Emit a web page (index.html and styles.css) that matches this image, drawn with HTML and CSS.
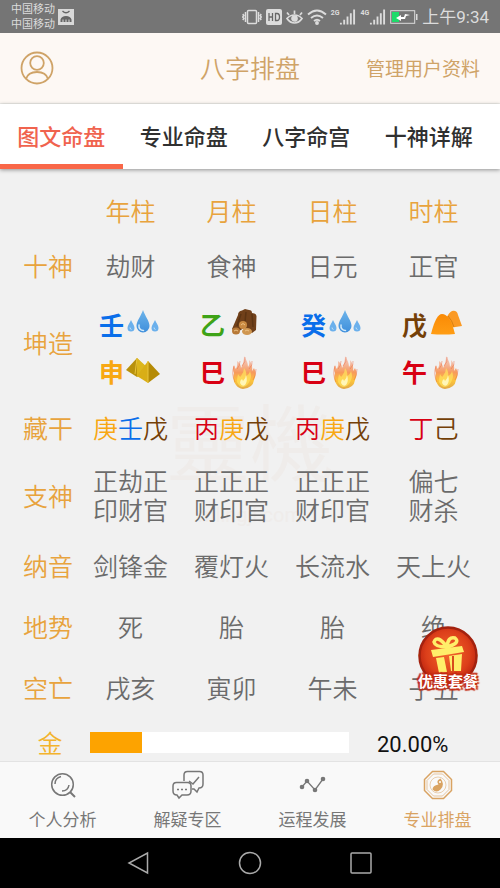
FILE: index.html
```html
<!DOCTYPE html>
<html lang="zh-CN">
<head>
<meta charset="utf-8">
<meta name="viewport" content="width=device-width, initial-scale=1">
<title>八字排盘</title>
<link rel="stylesheet" href="styles.css">
</head>
<body>
<svg class="defs" aria-hidden="true">
  <defs>
    <linearGradient id="g-water" x1="0" y1="0" x2="0" y2="1"><stop offset="0" stop-color="#6db4ea"/><stop offset="1" stop-color="#3f8fdc"/></linearGradient>
    <linearGradient id="g-fire" x1="0" y1="0" x2="0" y2="1"><stop offset="0" stop-color="#f4a08a" stop-opacity=".4"/><stop offset=".5" stop-color="#f79a5c"/><stop offset=".75" stop-color="#fdc43c"/><stop offset="1" stop-color="#e0a848"/></linearGradient>
    <linearGradient id="g-earth" x1="0" y1="0" x2="0" y2="1"><stop offset="0" stop-color="#fa8a05"/><stop offset="1" stop-color="#ff9d14"/></linearGradient>
    <radialGradient id="g-gift" cx=".5" cy=".45" r=".55"><stop offset="0" stop-color="#f4672c"/><stop offset=".7" stop-color="#dc3f1a"/><stop offset="1" stop-color="#bd2410"/></radialGradient>
    <symbol id="water" viewBox="0 0 36 36">
      <path d="M17 1C15 7 10.500 12 10.500 17a6.500 6.500 0 0 0 13 0C23.500 12 19 7 17 1z" fill="url(#g-water)"/>
      <path d="M13 16c-.5 3.500 1.500 5.500 4.500 5.500" fill="none" stroke="#d5ebfa" stroke-width="1.500" stroke-linecap="round"/>
      <path d="M5 11c-1 3-3.500 5-3.500 8a3.500 3.500 0 0 0 7 0c0-3-2.500-5-3.500-8zM29 11c-1 3-3.500 5-3.500 8a3.500 3.500 0 0 0 7 0c0-3-2.500-5-3.500-8z" fill="#6bb0ec"/>
      <path d="M4 18.500q.2 2 1.500 2M28 18.500q.2 2 1.500 2" fill="none" stroke="#c0e0f8"/>
    </symbol>
    <symbol id="wood" viewBox="0 0 36 36">
      <path d="M11 6q0-4 4-4.500L18 0l4 1q3 0 3 3 4 0 4.500 3L29 21l-4 3-8-5-8 5-4-4z" fill="#70401a"/>
      <path d="M14 5l-4 12M19 3l-1 10M25 5l1 13" stroke="#5c3413" stroke-width="1.500"/>
      <circle cx="16" cy="16" r="4" fill="#c98941"/><ellipse cx="9" cy="22" rx="4" ry="3.500" fill="#b87937"/><ellipse cx="20" cy="22.500" rx="5" ry="3.500" fill="#cf9650"/>
      <path d="M14 16q2-3 4 0M7 22q2-2 4 0M18 22q2-2 4 0" fill="none" stroke="#edc184"/>
    </symbol>
    <symbol id="gold" viewBox="0 0 36 36">
      <path d="M0 14L11 2l7 8-7 11z" fill="#b8910c"/><path d="M11 2l10 9-7 9-3 1z" fill="#dcb61c"/>
      <path d="M11 20L22 5v22z" fill="#d9ae16"/><path d="M22 5l12 13-12 9z" fill="#b58b06"/><path d="M11 2L9 18M22 5v22" stroke="#e8c53c"/>
    </symbol>
    <symbol id="fire" viewBox="0 0 36 36">
      <path d="M9 29Q5 24 7 17q-2-5 0-8 1 3 2 4 2-4 1-8 4 3 4 7 3-5 3-12 4 6 4 11 2-2 1-7 4 4 3 11l2-3q3 5 0 12-1 8-11 9-5-1-7-4z" fill="url(#g-fire)"/>
      <path d="M10 26q0-4 1-8 2 4 3 2 3-4 3-8 3 4 2 8 3-1 4-5 2 5 0 9-2 6-7 7-4 0-6-5z" fill="#ffe05c" opacity=".75"/>
      <path d="M13 27q0-3 2-4l1 2q3-3 3-6 2 6-1 10-3 2-5-2z" fill="#fff6b8"/>
      <path d="M7 10Q4 18 8 26M13 5q0 5-3 8M18 1q1 5-3 9M25 5q1 4-3 8M29 13q0 7-3 11" fill="none" stroke="#e8653f" stroke-opacity=".45"/>
    </symbol>
    <symbol id="earth" viewBox="0 0 36 36">
      <path d="M17 10q3-7 6-8 5-1 6 4l4 11-13 2z" fill="#fb9a25"/>
      <path d="M2 25Q7 5 13 5q8 0 13 20-12 1-24 0z" fill="url(#g-earth)"/><path d="M19 7q4 4 6 11" fill="none" stroke="#d9800f"/>
    </symbol>
    <symbol id="signal" viewBox="0 0 18 16"><path d="M1 14h2v2H1zM4.500 11h2v5h-2zM8 7.500h2V16H8zM11.500 4h2v12h-2zM15 0h2v16h-2z" fill="currentColor"/></symbol>
  </defs>
</svg>

<div class="status">
  <div class="carrier"><span>中国移动</span><span>中国移动</span></div>
  <svg class="app-badge" viewBox="0 0 16 16"><path fill="#d9d9d9" d="M0 0h16v16H0z"/><path d="M4.500 2q3.500 3.500 7 0" fill="none" stroke="#666" stroke-width="1.400"/><path d="M2.500 13V10.500Q3.500 7 8 7t5.500 3.500V13h-2v-2.500h-1V13h-2v-2.500h-1V13h-2v-2.500h-1V13z" fill="#666"/></svg>
  <div class="indicators">
    <svg width="20" height="16" viewBox="0 0 20 16" fill="none" stroke="currentColor" stroke-width="1.500"><rect x="5.500" y="1.500" width="9" height="13" rx="1"/><path d="M3.500 3v10M.8 5l1 1.500L.8 8l1 1.500-1 1.500M16.500 3v10M19.200 5l-1 1.500 1 1.500-1 1.500 1 1.500"/></svg>
    <svg width="16" height="16" viewBox="0 0 16 16"><rect width="16" height="16" rx="2" fill="currentColor"/><path d="M3 4v8M3 8h3.500M6.500 4v8M9.500 4.500v7h1.500q2.500 0 2.500-3.500T11 4.500z" fill="none" stroke="#666" stroke-width="1.300"/></svg>
    <svg width="17" height="16" viewBox="0 0 17 16" fill="none" stroke="currentColor" stroke-width="1.700"><path d="M1 9.500Q4 6 8.500 6T16 9.500Q13 14 8.500 14T1 9.500zM3 6L1 3.500M8.500 5V1.500M14 6l2-2.500"/><circle cx="8.500" cy="9.500" r="2.500" fill="currentColor"/></svg>
    <svg width="20" height="16" viewBox="0 0 20 16" fill="none" stroke="currentColor" stroke-width="1.900"><path d="M1 5.500q9-8 18 0M4 9q6-5 12 0M7 12q3-2.500 6 0"/><circle cx="10" cy="14" r="1" fill="currentColor"/></svg>
    <span class="cell"><small>2G</small><svg width="17" height="16"><use href="#signal"/></svg></span>
    <span class="cell"><small>4G</small><svg width="17" height="16"><use href="#signal"/></svg></span>
    <svg class="battery" width="28" height="14" viewBox="0 0 28 14"><rect x=".7" y=".7" width="24" height="12.600" fill="none" stroke="currentColor"/><path d="M2 2h7v10H2z" fill="#1edb6a"/><path d="M26 4h1.500v6H26z" fill="currentColor"/><path d="M6 8l5-3v2h3l1-3 5 1-4 1-1 3h-4v2z" fill="#fff"/></svg>
    <time>上午9:34</time>
  </div>
</div>

<header class="topbar">
  <button class="profile" aria-label="用户"><svg viewBox="0 0 34 34" fill="none" stroke="currentColor" stroke-width="1.800"><circle cx="17" cy="17" r="15.500"/><circle cx="17" cy="12" r="6.800"/><path d="M6 28q2-7 11-7t11 7"/></svg></button>
  <h1>八字排盘</h1>
  <a href="#manage">管理用户资料</a>
</header>

<nav class="tabs">
  <a class="active" href="#t1">图文命盘</a><a href="#t2">专业命盘</a><a href="#t3">八字命宫</a><a href="#t4">十神详解</a>
</nav>

<main>
  <div class="watermark" aria-hidden="true"><span>靈機</span><small>mlingji.com</small></div>
  <table>
    <thead><tr class="head"><td></td><th>年柱</th><th>月柱</th><th>日柱</th><th>时柱</th></tr></thead>
    <tbody>
      <tr><th>十神</th><td>劫财</td><td>食神</td><td>日元</td><td>正官</td></tr>
      <tr class="stems"><th>坤造</th>
        <td><div class="pair blue">壬<svg><use href="#water"/></svg></div><div class="pair amber">申<svg><use href="#gold"/></svg></div></td>
        <td><div class="pair green">乙<svg><use href="#wood"/></svg></div><div class="pair red">巳<svg><use href="#fire"/></svg></div></td>
        <td><div class="pair blue">癸<svg><use href="#water"/></svg></div><div class="pair red">巳<svg><use href="#fire"/></svg></div></td>
        <td><div class="pair brown">戊<svg><use href="#earth"/></svg></div><div class="pair red">午<svg><use href="#fire"/></svg></div></td>
      </tr>
      <tr class="hidden-stems"><th>藏干</th>
        <td><span class="amber">庚</span><span class="blue">壬</span><span class="brown">戊</span></td>
        <td><span class="red">丙</span><span class="amber">庚</span><span class="brown">戊</span></td>
        <td><span class="red">丙</span><span class="amber">庚</span><span class="brown">戊</span></td>
        <td><span class="red">丁</span><span class="brown">己</span></td>
      </tr>
      <tr class="gods"><th>支神</th><td>正劫正<br>印财官</td><td>正正正<br>财印官</td><td>正正正<br>财印官</td><td>偏七<br>财杀</td></tr>
      <tr><th>纳音</th><td>剑锋金</td><td>覆灯火</td><td>长流水</td><td>天上火</td></tr>
      <tr><th>地势</th><td>死</td><td>胎</td><td>胎</td><td>绝</td></tr>
      <tr><th>空亡</th><td>戌亥</td><td>寅卯</td><td>午未</td><td>子丑</td></tr>
    </tbody>
  </table>
  <div class="element">
    <span class="name">金</span>
    <div class="track"><div class="fill" style="width:20%"></div></div>
    <span class="percent">20.00%</span>
  </div>
  <button class="offer">
    <svg viewBox="0 0 64 60"><path d="M2 29l8-8v18zM62 29l-8-8v18z" fill="#f8d548"/><circle cx="32" cy="30" r="28.500" fill="url(#g-gift)" stroke="#a3220f" stroke-width="2.500"/><g fill="#ffee6a"><path d="M15 24l31-4 2 6-31 5zM20 32l8-1 3 15-8 1zM33 30l13-2-1 17h-10z"/></g><path d="M37 30v16" stroke="#d84b1c" stroke-width="2"/><path d="M31 21q-12 0-13-5 3-8 13 5zm0 0q1-11 8-9 6 5-8 9z" fill="none" stroke="#ffee6a" stroke-width="3.500"/></svg>
    <span>优惠套餐</span>
  </button>
</main>

<nav class="bottom">
  <a href="#b1"><svg viewBox="0 0 32 32" fill="none" stroke="currentColor" stroke-width="1.500"><circle cx="15.500" cy="15.500" r="10.800"/><path d="M23 23l5 5" stroke-width="2"/><path d="M8 15q0-6 6-7.500M15 22q6 0 7-6"/></svg>个人分析</a>
  <a href="#b2"><svg viewBox="0 0 32 32" fill="none" stroke="currentColor" stroke-width="1.500"><path d="M12 12V6q0-3.500 3.500-3.500h12Q31 2.500 31 6v9q0 4-4 4l-2 4-3-3h-2"/><path d="M17 12l4 3 6-7"/><path d="M4.500 13.500h11q3.500 0 3.500 3.500v5q0 4-4 4h-5l-3 3-2-3q-4 0-4-4v-5q0-3.500 3.500-3.500z"/><path d="M5 20.500h2M9 20.500h2M13 20.500h2"/></svg>解疑专区</a>
  <a href="#b3"><svg viewBox="0 0 32 32" fill="none" stroke="currentColor" stroke-width="1.300"><path d="M5 18l5-6 8 9 8-11"/><g fill="currentColor" stroke="none"><circle cx="5" cy="18" r="2.300"/><circle cx="10" cy="12" r="2.300"/><circle cx="18" cy="21" r="2.300"/><circle cx="26" cy="10" r="2.300"/></g></svg>运程发展</a>
  <a class="active" href="#b4"><svg viewBox="0 0 32 32" fill="none" stroke="currentColor"><path stroke-width="1.500" d="M10.500 2.500h11l8 8v11l-8 8h-11l-8-8v-11z"/><path stroke-width=".6" d="M11.500 5h9l6.500 6.500v9L20.500 27h-9L5 20.500v-9z"/><circle cx="16" cy="16" r="8" stroke-width=".5"/><path d="M18.500 9.500q-5 2-2 6-6 1-6 5 4 4 8 0 5-5 0-11z" fill="currentColor" stroke="none"/><circle cx="18" cy="13" r="1" fill="#fff" stroke="none"/></svg>专业排盘</a>
</nav>

<div class="system">
  <button aria-label="返回"><svg viewBox="0 0 24 24"><path d="M20.500 2v20L2 12z"/></svg></button>
  <button aria-label="主页"><svg viewBox="0 0 24 24"><circle cx="12" cy="12" r="10.500"/></svg></button>
  <button aria-label="最近"><svg viewBox="0 0 24 24"><rect x="2" y="2" width="20" height="20" rx="1"/></svg></button>
</div>
</body>
</html>
```
FILE: styles.css
```css
* { box-sizing: border-box; }
body {
  margin: 0;
  height: 100vh;
  display: flex;
  flex-direction: column;
  overflow: hidden;
  background: #f1f1f1;
  color: #6b6b6b;
  font-family: Roboto, "Noto Sans CJK SC", sans-serif;
}
a { color: inherit; text-decoration: none; }
button { padding: 0; border: 0; background: none; color: inherit; font: inherit; }
svg { display: block; }
.defs { position: absolute; width: 0; height: 0; }

.status {
  flex: none;
  display: flex;
  align-items: center;
  height: 33px;
  padding: 0 11px;
  background: #757575;
  color: #dcdcdc;
}
.carrier { display: flex; flex-direction: column; font-size: 11px; line-height: 15px; }
.app-badge { width: 16px; height: 16px; margin-left: 3px; }
.indicators { display: flex; align-items: center; gap: 4px; margin-left: auto; }
.cell { display: flex; align-items: flex-start; }
.cell small { font-size: 7px; line-height: 8px; font-weight: 700; }
.indicators time { font-size: 17px; line-height: 24px; }

.topbar {
  flex: none;
  display: grid;
  grid-template-columns: 1fr auto 1fr;
  align-items: center;
  height: 71px;
  padding: 0 20px;
  background: #fdf8f4;
  border-bottom: 1px solid #f0efeb;
  color: #cfa367;
}
.profile { width: 34px; height: 34px; }
.topbar h1 { margin: 0; padding-top: 4px; font-size: 25px; line-height: 36px; font-weight: 350; }
.topbar a { justify-self: end; padding-top: 4px; font-size: 19px; line-height: 28px; }

.tabs {
  flex: none;
  position: relative;
  display: flex;
  height: 65px;
  padding-right: 10px;
  background: #fff;
  color: #303030;
  box-shadow: 0 1px 4px rgba(0, 0, 0, .4);
}
.tabs a {
  flex: 1;
  display: flex;
  align-items: center;
  justify-content: center;
  padding-top: 2px;
  border-bottom: 5px solid transparent;
  font-size: 22px;
  font-weight: 500;
}
.tabs .active { color: #f0634e; border-color: #f96748; }

main { position: relative; flex: 1; min-height: 0; overflow: hidden; padding: 19px 16px 0; }
.watermark {
  position: absolute;
  top: 224px;
  left: 0;
  right: 0;
  display: flex;
  flex-direction: column;
  align-items: center;
  color: #efecea;
  font-size: 84px;
  line-height: 108px;
}
.watermark small { font-size: 20px; line-height: 28px; }

table { position: relative; width: 100%; table-layout: fixed; border-collapse: collapse; }
tr { height: 61px; }
td, th { padding: 0; text-align: center; font-size: 25px; line-height: 29px; font-weight: 350; }
td:first-child, tbody th { width: 64px; }
th { color: #e8a33d; }
.head { height: 49px; }
.stems { height: 104px; }
.stems th { padding-bottom: 12px; }
.hidden-stems { height: 55px; }
.gods { height: 80px; }
.pair {
  display: flex;
  align-items: center;
  justify-content: center;
  gap: 2px;
  height: 47px;
  font-size: 25px;
  font-weight: 700;
}
.pair svg { width: 36px; height: 36px; }
.blue { color: #0a6eea; }
.amber { color: #f8a813; }
.green { color: #3ea317; }
.red { color: #d80013; }
.brown { color: #744007; }

.element {
  position: relative;
  display: flex;
  align-items: center;
  height: 44px;
}
.name { width: 68px; text-align: center; color: #f3b32c; font-size: 25px; font-weight: 350; }
.track { flex: 1; height: 21px; margin-left: 6px; background: #fff; }
.fill { height: 100%; background: #fda300; }
.percent { width: 135px; padding: 4px 0 0 28px; color: #111; font-size: 22px; }

.offer { position: absolute; right: 20px; bottom: 69px; width: 64px; }
.offer span {
  display: block;
  margin: -14px -4px 0;
  color: #fff;
  font-size: 15px;
  line-height: 20px;
  font-weight: 700;
  white-space: nowrap;
  text-shadow: 2px 1px 1px #c22a14, -2px -1px 1px #c22a14, 1px -2px 1px #c22a14, -1px 2px 1px #c22a14;
}

.bottom {
  flex: none;
  position: relative;
  display: flex;
  height: 77px;
  border-top: 1px solid #e3e3e3;
  background: #f9f9f9;
  color: #777;
}
.bottom a {
  flex: 1;
  display: flex;
  flex-direction: column;
  align-items: center;
  gap: 7px;
  padding-top: 7px;
  font-size: 17px;
  line-height: 24px;
}
.bottom svg { width: 32px; height: 32px; }
.bottom .active { color: #d9a362; }

.system {
  flex: none;
  display: flex;
  align-items: center;
  justify-content: center;
  gap: 87px;
  height: 50px;
  background: #000;
}
.system svg { width: 24px; height: 24px; fill: none; stroke: #aaa; stroke-width: 1.5; }
```
